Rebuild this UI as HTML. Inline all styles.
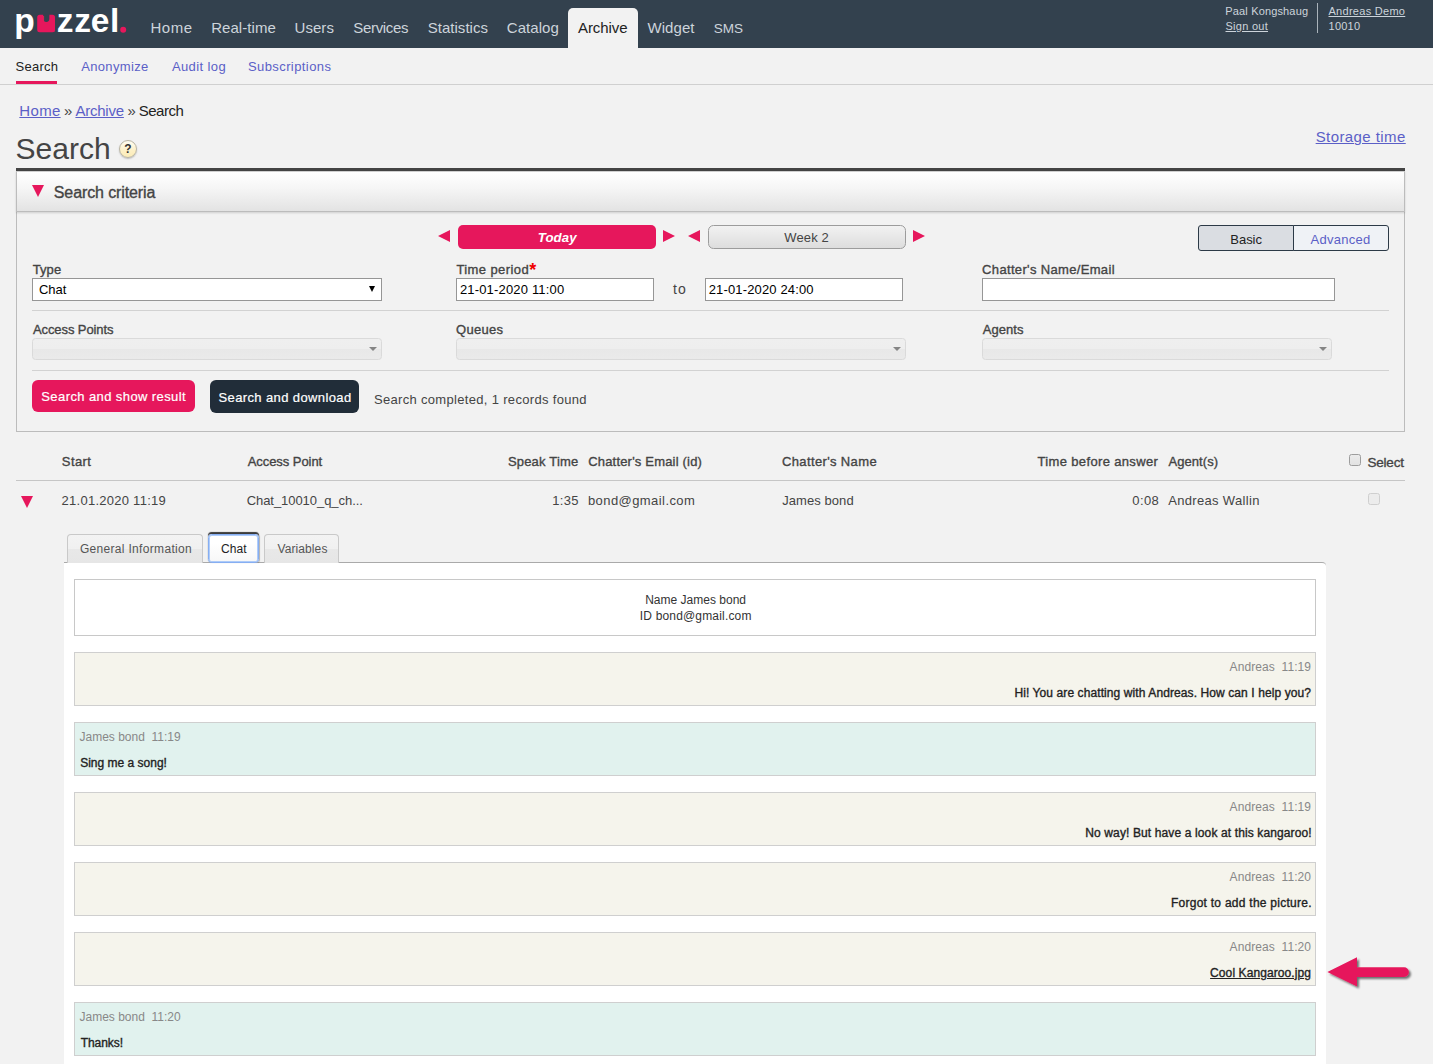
<!DOCTYPE html>
<html lang="en">
<head>
<meta charset="utf-8">
<title>Puzzel - Archive Search</title>
<style>
*{box-sizing:border-box;margin:0;padding:0}
html,body{width:1433px;height:1064px;overflow:hidden;background:#f2f2f2}
body{font-family:"Liberation Sans",sans-serif;font-size:13px;color:#333;position:relative}
.abs{position:absolute}
.t{position:absolute;white-space:pre;font-family:"Liberation Sans",sans-serif}
.t.sb{-webkit-text-stroke:.35px currentColor}
.t.b{font-weight:bold}
.t.bi{font-weight:bold;font-style:italic}
.t.u{text-decoration:underline;text-decoration-thickness:1px}
/* top nav */
#topbar{position:absolute;left:0;top:0;width:1433px;height:48px;background:#33414e}
#tab-archive{position:absolute;left:568px;top:8px;width:70px;height:40px;background:#f2f2f2;border-radius:5px 5px 0 0}
#subnav{position:absolute;left:0;top:48px;width:1433px;height:37px;background:#f2f2f2;border-bottom:1px solid #d0d0d0}
/* heading */
#help{position:absolute;left:119px;top:140px;width:18px;height:18px;border-radius:9px;border:1px solid #b9b4a2;background:linear-gradient(#fffdf3,#fdf0c6 60%,#fbecb8);box-shadow:0 1px 1.5px rgba(0,0,0,.22);font-size:12px;font-weight:bold;line-height:17px;text-align:center;color:#333}
#hr1{position:absolute;left:16px;top:168px;width:1389px;height:3px;background:#444}
#panel{position:absolute;left:16px;top:171px;width:1389px;height:261px;border:1px solid #bcbcbc;border-top:none;background:#f2f2f2}
#phead{position:absolute;left:16px;top:171px;width:1389px;height:41px;border:1px solid #bcbcbc;border-top:1px solid #d0d0d0;background:linear-gradient(#ffffff 0%,#f6f6f6 40%,#e3e3e3 100%);box-shadow:0 1px 2px rgba(0,0,0,.15)}
.tri-d{position:absolute;width:0;height:0;border-left:6.5px solid transparent;border-right:6.5px solid transparent;border-top:12px solid #e6175c}
.tri-l{position:absolute;width:0;height:0;border-top:6px solid transparent;border-bottom:6px solid transparent;border-right:12px solid #e6175c}
.tri-r{position:absolute;width:0;height:0;border-top:6px solid transparent;border-bottom:6px solid transparent;border-left:12px solid #e6175c}
#today{position:absolute;left:458px;top:225px;width:198px;height:24px;border-radius:5px;background:#e6175c}
#week{position:absolute;left:708px;top:225px;width:198px;height:24px;border-radius:5.5px;border:1px solid #9c9c9c;background:linear-gradient(#f2f2f2,#dddddd)}
#basic{position:absolute;left:1198px;top:225px;width:96px;height:26px;border:1px solid #2c3a47;border-radius:3px 0 0 3px;background:#dadde2}
#adv{position:absolute;left:1293px;top:225px;width:96px;height:26px;border:1px solid #2c3a47;border-radius:0 3px 3px 0;background:#eff2f6}
.inp{position:absolute;top:278px;height:23px;border:1px solid #969696;background:#fff}
.dis{position:absolute;top:338px;height:22px;border:1px solid #dadada;border-radius:3.5px;background:linear-gradient(#efefef 0%,#eeeeee 50%,#e8e8e8 51%,#eaeaea 100%)}
.dis i{position:absolute;right:3.8px;top:8px;width:0;height:0;border-left:4px solid transparent;border-right:4px solid transparent;border-top:4.3px solid #858585}
.sep{position:absolute;left:32px;width:1357px;height:1px;background:#d2d2d2}
.btn{position:absolute;top:380px;height:32px;border-radius:6px}
/* results */
.cb{position:absolute;width:12px;height:12px;border:1px solid #9d9d9d;border-radius:2.5px;background:linear-gradient(#ebebeb,#e2e2e2)}
.tab{position:absolute;top:534px;height:29px;border:1px solid #c9c9c9;border-bottom:none;border-radius:4px 4px 0 0;background:linear-gradient(#f3f3f3 0%,#f0f0f0 50%,#e8e8e8 51%,#e6e6e6 100%)}
#chattab{top:534px;height:29px;background:linear-gradient(#fff 30%,#f7f7f7);border:1px solid #86aef2;border-radius:3.5px;box-shadow:inset 0 0 0 1px rgba(150,188,248,.75),0 -1.6px .8px rgba(50,50,50,.95),1px 0 1px rgba(0,0,0,.22)}
#tabpanel{position:absolute;left:64px;top:562px;width:1262px;height:502px;background:#fff;border-top:1px solid #aaa;border-radius:0 4px 0 0}
#namebox{position:absolute;left:74px;top:579px;width:1242px;height:57px;border:1px solid #c8c8c8;background:#fff}
.msg{position:absolute;left:74px;width:1242px;height:54px;border:1px solid #cfcfcf}
.msg.a{background:#f5f4ec}
.msg.c{background:#e1f2ee}
</style>
</head>
<body>
<div id="topbar"></div>
<div id="tab-archive"></div>
<svg id="logo" width="140" height="48" viewBox="0 0 140 48" style="position:absolute;left:0;top:0">
<text y="31.8" font-family="Liberation Sans, sans-serif" font-weight="bold" font-size="33.5" fill="#fff"><tspan x="14.3">p</tspan><tspan x="37.5" fill="#e6175c" font-size="30">u</tspan><tspan x="56.8">z</tspan><tspan x="74.2">z</tspan><tspan x="90.8">e</tspan><tspan x="110">l</tspan><tspan x="121.2" y="31" fill="#e6175c" font-size="16">.</tspan></text>
<circle cx="123.2" cy="29.8" r="3" fill="#e6175c"/>
<path fill="#e6175c" d="M39.7 14.7 H43.2 V18.8 A3.1 3.1 0 0 0 49.4 18.8 V14.7 H52.5 A2.5 2.5 0 0 1 55 17.2 V29.7 A2.5 2.5 0 0 1 52.5 32.2 H39.7 A2.5 2.5 0 0 1 37.2 29.7 V17.2 A2.5 2.5 0 0 1 39.7 14.7 Z"/>
</svg>
<div class="abs" style="left:1317px;top:3px;width:1px;height:30px;background:#aab3bb"></div>
<div id="subnav"></div>
<div class="abs" style="left:16px;top:81px;width:41px;height:3px;background:#e6175c"></div>
<div id="help">?</div>
<div id="hr1"></div>
<div id="panel"></div>
<div id="phead"></div>
<div class="tri-d" style="left:32.3px;top:185px"></div>
<div class="tri-l" style="left:438px;top:230px"></div>
<div id="today"></div>
<div class="tri-r" style="left:663px;top:230px"></div>
<div class="tri-l" style="left:688px;top:230px"></div>
<div id="week"></div>
<div class="tri-r" style="left:913px;top:230px"></div>
<div id="basic"></div>
<div id="adv"></div>
<div class="inp" style="left:32px;width:350px"><i style="position:absolute;left:336px;top:7.3px;width:0;height:0;border-left:3.2px solid transparent;border-right:3.2px solid transparent;border-top:6.2px solid #000"></i></div>
<div class="inp" style="left:456px;width:198px"></div>
<div class="inp" style="left:705px;width:198px"></div>
<div class="inp" style="left:982px;width:353px"></div>
<div class="sep" style="top:310px"></div>
<div class="dis" style="left:32px;width:350px"><i></i></div>
<div class="dis" style="left:456px;width:450px"><i></i></div>
<div class="dis" style="left:982px;width:350px"><i></i></div>
<div class="sep" style="top:370px"></div>
<div class="btn" style="left:32px;width:163px;background:#e6175c"></div>
<div class="btn" style="left:210px;width:149px;height:33px;background:#212d39"></div>
<div class="cb" style="left:1349px;top:454px"></div>
<div class="abs" style="left:16px;top:480px;width:1389px;height:1px;background:#c6c6c6"></div>
<div class="tri-d" style="left:21px;top:496px"></div>
<div class="cb" style="left:1368px;top:493px;border-color:#cfcfcf;background:#ececec"></div>
<div id="tabpanel"></div>
<div class="tab" style="left:67px;width:136px"></div>
<div class="tab" style="left:264px;width:75px"></div>
<div class="tab" id="chattab" style="left:208px;width:51px"></div>
<div id="namebox"></div>
<div class="msg a" style="top:652px"></div>
<div class="msg c" style="top:722px"></div>
<div class="msg a" style="top:792px"></div>
<div class="msg a" style="top:862px"></div>
<div class="msg a" style="top:932px"></div>
<div class="msg c" style="top:1002px"></div>
<svg class="abs" style="left:1320px;top:948px;overflow:visible" width="100" height="50" viewBox="1320 948 100 50">
<defs><filter id="ds" x="-20%" y="-20%" width="140%" height="160%"><feGaussianBlur in="SourceAlpha" stdDeviation="1.3"/><feOffset dx="1.5" dy="2"/><feComponentTransfer><feFuncA type="linear" slope=".55"/></feComponentTransfer><feMerge><feMergeNode/><feMergeNode in="SourceGraphic"/></feMerge></filter></defs>
<path filter="url(#ds)" fill="#e6175c" d="M1327.4 972 L1357 957.2 L1357 967.2 L1404 967.2 A4.9 4.9 0 0 1 1404 977 L1357 977 L1357 986.6 Z"/>
</svg>
<span class="t" style="left:150.55px;top:17px;font-size:15px;line-height:21px;color:#cdd4db;letter-spacing:0.483px">Home</span>
<span class="t" style="left:211.15px;top:17px;font-size:15px;line-height:21px;color:#cdd4db;letter-spacing:0.069px">Real-time</span>
<span class="t" style="left:294.55px;top:17px;font-size:15px;line-height:21px;color:#cdd4db;letter-spacing:0.050px">Users</span>
<span class="t" style="left:353.25px;top:17px;font-size:15px;line-height:21px;color:#cdd4db;letter-spacing:-0.321px">Services</span>
<span class="t" style="left:427.65px;top:17px;font-size:15px;line-height:21px;color:#cdd4db;letter-spacing:0.039px">Statistics</span>
<span class="t" style="left:506.85px;top:17px;font-size:15px;line-height:21px;color:#cdd4db;letter-spacing:0.033px">Catalog</span>
<span class="t" style="left:647.50px;top:17px;font-size:15px;line-height:21px;color:#cdd4db;letter-spacing:0.060px">Widget</span>
<span class="t" style="left:713.65px;top:19px;font-size:13.5px;line-height:19px;color:#cdd4db;letter-spacing:0.050px">SMS</span>
<span class="t" style="left:578.00px;top:17px;font-size:15px;line-height:21px;color:#222;letter-spacing:-0.083px">Archive</span>
<span class="t" style="left:1225.30px;top:3px;font-size:11px;line-height:16px;color:#cdd4db;letter-spacing:0.154px">Paal Kongshaug</span>
<span class="t u" style="left:1225.50px;top:18px;font-size:11px;line-height:16px;color:#cdd4db;letter-spacing:0.264px">Sign out</span>
<span class="t u" style="left:1328.50px;top:3px;font-size:11px;line-height:16px;color:#cdd4db;letter-spacing:0.282px">Andreas Demo</span>
<span class="t" style="left:1328.55px;top:18px;font-size:11px;line-height:16px;color:#cdd4db;letter-spacing:0.225px">10010</span>
<span class="t" style="left:15.55px;top:57px;font-size:13px;line-height:19px;color:#222;letter-spacing:0.240px">Search</span>
<span class="t" style="left:81.20px;top:57px;font-size:13px;line-height:19px;color:#5b5fc7;letter-spacing:0.344px">Anonymize</span>
<span class="t" style="left:171.90px;top:57px;font-size:13px;line-height:19px;color:#5b5fc7;letter-spacing:0.406px">Audit log</span>
<span class="t" style="left:247.95px;top:57px;font-size:13px;line-height:19px;color:#5b5fc7;letter-spacing:0.412px">Subscriptions</span>
<span class="t u" style="left:19.35px;top:100px;font-size:15px;line-height:21px;color:#5b5fc7;letter-spacing:0.317px">Home</span>
<span class="t" style="left:64.10px;top:100px;font-size:15px;line-height:21px;color:#444">»</span>
<span class="t u" style="left:75.40px;top:100px;font-size:15px;line-height:21px;color:#5b5fc7;letter-spacing:-0.217px">Archive</span>
<span class="t" style="left:127.60px;top:100px;font-size:15px;line-height:21px;color:#444">»</span>
<span class="t" style="left:138.65px;top:100px;font-size:15px;line-height:21px;color:#222;letter-spacing:-0.450px">Search</span>
<span class="t" style="left:15.50px;top:130px;font-size:30px;line-height:37px;color:#444;letter-spacing:0.050px">Search</span>
<span class="t u" style="left:1315.65px;top:126px;font-size:15px;line-height:21px;color:#5b5fc7;letter-spacing:0.423px">Storage time</span>
<span class="t sb" style="left:53.80px;top:182px;font-size:16px;line-height:21px;color:#444;letter-spacing:-0.111px">Search criteria</span>
<span class="t bi" style="left:537.80px;top:228px;font-size:13.25px;line-height:19px;color:#fff;letter-spacing:0.050px">Today</span>
<span class="t" style="left:784.30px;top:228px;font-size:13px;line-height:19px;color:#444;letter-spacing:0.130px">Week 2</span>
<span class="t" style="left:1230.30px;top:230px;font-size:13px;line-height:19px;color:#222;letter-spacing:-0.025px">Basic</span>
<span class="t" style="left:1310.50px;top:230px;font-size:13px;line-height:19px;color:#5b5fc7;letter-spacing:0.257px">Advanced</span>
<span class="t sb" style="left:32.70px;top:260px;font-size:13px;line-height:19px;color:#444;letter-spacing:0.083px">Type</span>
<span class="t sb" style="left:456.40px;top:260px;font-size:13px;line-height:19px;color:#444;letter-spacing:0.410px">Time period</span>
<span class="t b" style="left:529.20px;top:258px;font-size:18px;line-height:24px;color:#f00000">*</span>
<span class="t sb" style="left:982.10px;top:260px;font-size:13px;line-height:19px;color:#444;letter-spacing:0.339px">Chatter&#x27;s Name/Email</span>
<span class="t sb" style="left:32.95px;top:320px;font-size:13px;line-height:19px;color:#444;letter-spacing:-0.092px">Access Points</span>
<span class="t sb" style="left:456.10px;top:320px;font-size:13px;line-height:19px;color:#444;letter-spacing:0.290px">Queues</span>
<span class="t sb" style="left:982.85px;top:320px;font-size:13px;line-height:19px;color:#444;letter-spacing:0.040px">Agents</span>
<span class="t" style="left:673.05px;top:279px;font-size:14px;line-height:20px;color:#444;letter-spacing:0.950px">to</span>
<span class="t" style="left:38.95px;top:280px;font-size:13px;line-height:19px;color:#000">Chat</span>
<span class="t" style="left:459.95px;top:280px;font-size:13px;line-height:19px;color:#000;letter-spacing:0.167px">21-01-2020 11:00</span>
<span class="t" style="left:708.65px;top:280px;font-size:13px;line-height:19px;color:#000;letter-spacing:0.153px">21-01-2020 24:00</span>
<span class="t sb" style="left:41.30px;top:387px;font-size:13px;line-height:19px;color:#fff;letter-spacing:0.405px;-webkit-text-stroke-width:.2px">Search and show result</span>
<span class="t sb" style="left:218.50px;top:388px;font-size:13px;line-height:19px;color:#fff;letter-spacing:0.383px;-webkit-text-stroke-width:.2px">Search and download</span>
<span class="t" style="left:373.95px;top:390px;font-size:13px;line-height:19px;color:#444;letter-spacing:0.320px">Search completed, 1 records found</span>
<span class="t sb" style="left:61.80px;top:452px;font-size:13px;line-height:19px;color:#444;letter-spacing:0.425px">Start</span>
<span class="t sb" style="left:247.65px;top:452px;font-size:13px;line-height:19px;color:#444;letter-spacing:-0.055px">Access Point</span>
<span class="t sb" style="left:507.90px;top:452px;font-size:13px;line-height:19px;color:#444;letter-spacing:0.194px">Speak Time</span>
<span class="t sb" style="left:588.20px;top:452px;font-size:13px;line-height:19px;color:#444;letter-spacing:0.189px">Chatter&#x27;s Email (id)</span>
<span class="t sb" style="left:782.00px;top:452px;font-size:13px;line-height:19px;color:#444;letter-spacing:0.362px">Chatter&#x27;s Name</span>
<span class="t sb" style="left:1037.50px;top:452px;font-size:13px;line-height:19px;color:#444;letter-spacing:0.350px">Time before answer</span>
<span class="t sb" style="left:1168.45px;top:452px;font-size:13px;line-height:19px;color:#444;letter-spacing:0.079px">Agent(s)</span>
<span class="t sb" style="left:1367.50px;top:453px;font-size:13.5px;line-height:19px;color:#444;letter-spacing:-0.220px">Select</span>
<span class="t" style="left:61.55px;top:491px;font-size:13px;line-height:19px;color:#444;letter-spacing:0.263px">21.01.2020 11:19</span>
<span class="t" style="left:246.65px;top:491px;font-size:13px;line-height:19px;color:#444;letter-spacing:-0.050px">Chat_10010_q_ch...</span>
<span class="t" style="left:552.30px;top:491px;font-size:13px;line-height:19px;color:#444;letter-spacing:0.283px">1:35</span>
<span class="t" style="left:587.95px;top:491px;font-size:13px;line-height:19px;color:#444;letter-spacing:0.427px">bond@gmail.com</span>
<span class="t" style="left:782.25px;top:491px;font-size:13px;line-height:19px;color:#444;letter-spacing:0.061px">James bond</span>
<span class="t" style="left:1132.30px;top:491px;font-size:13px;line-height:19px;color:#444;letter-spacing:0.417px">0:08</span>
<span class="t" style="left:1168.20px;top:491px;font-size:13px;line-height:19px;color:#444;letter-spacing:0.331px">Andreas Wallin</span>
<span class="t" style="left:79.90px;top:540px;font-size:12px;line-height:18px;color:#555;letter-spacing:0.319px">General Information</span>
<span class="t" style="left:221.00px;top:540px;font-size:12px;line-height:18px;color:#222;letter-spacing:0.083px">Chat</span>
<span class="t" style="left:277.50px;top:540px;font-size:12px;line-height:18px;color:#555;letter-spacing:0.094px">Variables</span>
<span class="t" style="left:645.20px;top:591px;font-size:12px;line-height:18px;color:#333;letter-spacing:0.007px">Name James bond</span>
<span class="t" style="left:639.80px;top:607px;font-size:12px;line-height:18px;color:#333;letter-spacing:0.169px">ID bond@gmail.com</span>
<span class="t" style="left:1229.60px;top:658px;font-size:12px;line-height:18px;color:#888;letter-spacing:0.069px">Andreas&nbsp; 11:19</span>
<span class="t sb" style="left:1014.45px;top:684px;font-size:12px;line-height:18px;color:#222;letter-spacing:0.094px">Hi! You are chatting with Andreas. How can I help you?</span>
<span class="t" style="left:79.55px;top:728px;font-size:12px;line-height:18px;color:#888;letter-spacing:-0.006px">James bond&nbsp; 11:19</span>
<span class="t sb" style="left:80.20px;top:754px;font-size:12px;line-height:18px;color:#222">Sing me a song!</span>
<span class="t" style="left:1229.60px;top:798px;font-size:12px;line-height:18px;color:#888;letter-spacing:0.069px">Andreas&nbsp; 11:19</span>
<span class="t sb" style="left:1085.25px;top:824px;font-size:12px;line-height:18px;color:#222;letter-spacing:0.124px">No way! But have a look at this kangaroo!</span>
<span class="t" style="left:1229.60px;top:868px;font-size:12px;line-height:18px;color:#888;letter-spacing:0.069px">Andreas&nbsp; 11:20</span>
<span class="t sb" style="left:1170.95px;top:894px;font-size:12px;line-height:18px;color:#222;letter-spacing:0.260px">Forgot to add the picture.</span>
<span class="t" style="left:1229.60px;top:938px;font-size:12px;line-height:18px;color:#888;letter-spacing:0.069px">Andreas&nbsp; 11:20</span>
<span class="t sb u" style="left:1210.10px;top:964px;font-size:12px;line-height:18px;color:#222;letter-spacing:0.091px">Cool Kangaroo.jpg</span>
<span class="t" style="left:79.55px;top:1008px;font-size:12px;line-height:18px;color:#888;letter-spacing:-0.006px">James bond&nbsp; 11:20</span>
<span class="t sb" style="left:80.70px;top:1034px;font-size:12px;line-height:18px;color:#222;letter-spacing:-0.058px">Thanks!</span>
</body>
</html>
